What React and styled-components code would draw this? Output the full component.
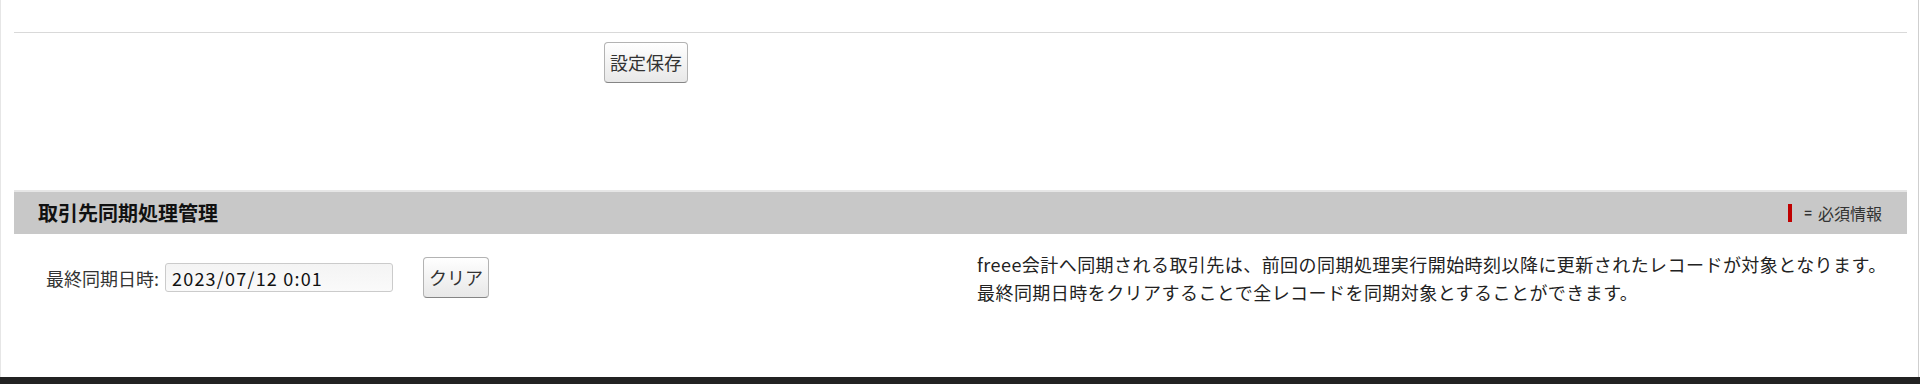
import React from "react";
import styled, { createGlobalStyle } from "styled-components";

const Global = createGlobalStyle`
  html, body { margin: 0; padding: 0; background: #fff; }
  body {
    font-family: "Noto Sans CJK JP", "Noto Sans", sans-serif;
    color: #222;
  }
  * { box-sizing: border-box; }
`;

const Page = styled.div`
  width: 1919px;
  height: 377px;
  border-left: 1px solid #e6e6e6;
  border-right: 1px solid #cfcfcf;
  padding: 0 11px 0 13px;
  display: flex;
  flex-direction: column;
`;

const Separator = styled.div`
  margin-top: 32px;
  height: 1px;
  background: #d9d9d9;
`;

const ButtonRow = styled.div`
  display: flex;
  padding: 9px 0 0 590px;
  height: 157px;
`;

const Button = styled.button`
  font-family: "Noto Sans CJK JP", sans-serif;
  font-size: 18px;
  line-height: 24px;
  color: #333;
  height: 41px;
  padding: 0 5px 2px;
  border: 1px solid #b3b3b3;
  border-bottom-color: #858585;
  border-radius: 4px;
  background: linear-gradient(#ffffff, #f3f3f3 50%, #e8e8e8);
  cursor: pointer;
  display: flex;
  align-items: center;
  justify-content: center;
`;

const SectionHeader = styled.div`
  border-top: 2px solid #e6e6e6;
  height: 44px;
  background: #c8c8c8;
  display: flex;
  align-items: center;
  justify-content: space-between;
  padding: 0 25px 0 24px;
`;

const Title = styled.h2`
  margin: 0;
  font-size: 20px;
  font-weight: 700;
  line-height: 24px;
  color: #111;
`;

const Required = styled.div`
  display: flex;
  align-items: center;
  font-size: 16px;
  color: #333;
  line-height: 20px;
`;

const RedBar = styled.span`
  display: inline-block;
  width: 4px;
  height: 18px;
  background: #c00000;
  margin-right: 12px;
`;

const Eq = styled.span`
  font-weight: 700;
  font-size: 13px;
  margin-right: 6px;
`;

const Body = styled.div`
  display: grid;
  grid-template-columns: 946px 1fr;
  padding-top: 15px;
`;

const Field = styled.div`
  display: flex;
  align-items: center;
  padding-left: 32px;
`;

const Label = styled.label`
  font-size: 18px;
  color: #333;
  margin-right: 6px;
  line-height: 24px;
`;

const Input = styled.input`
  width: 228px;
  height: 29px;
  font-family: "Noto Sans CJK JP", sans-serif;
  font-size: 18px;
  letter-spacing: 1.2px;
  color: #111;
  padding: 0 6px;
  border: 1px solid #cbcbcb;
  border-radius: 3px;
  background: linear-gradient(#f4f4f4, #fafafa);
  margin-right: 30px;
  outline: none;
`;

const Description = styled.p`
  margin: 1px 0 0;
  padding-left: 17px;
  font-size: 18px;
  letter-spacing: 0.45px;
  line-height: 28px;
  color: #222;
`;

const Footer = styled.div`
  height: 7px;
  background: #222;
`;

export default function App() {
  return (
    <>
      <Global />
      <Page>
        <Separator />
        <ButtonRow>
          <Button>設定保存</Button>
        </ButtonRow>
        <SectionHeader>
          <Title>取引先同期処理管理</Title>
          <Required>
            <RedBar />
            <Eq>=</Eq>
            必須情報
          </Required>
        </SectionHeader>
        <Body>
          <Field>
            <Label>最終同期日時:</Label>
            <Input defaultValue="2023/07/12 0:01" />
            <Button>クリア</Button>
          </Field>
          <Description>
            freee会計へ同期される取引先は、前回の同期処理実行開始時刻以降に更新されたレコードが対象となります。
            <br />
            最終同期日時をクリアすることで全レコードを同期対象とすることができます。
          </Description>
        </Body>
      </Page>
      <Footer />
    </>
  );
}
